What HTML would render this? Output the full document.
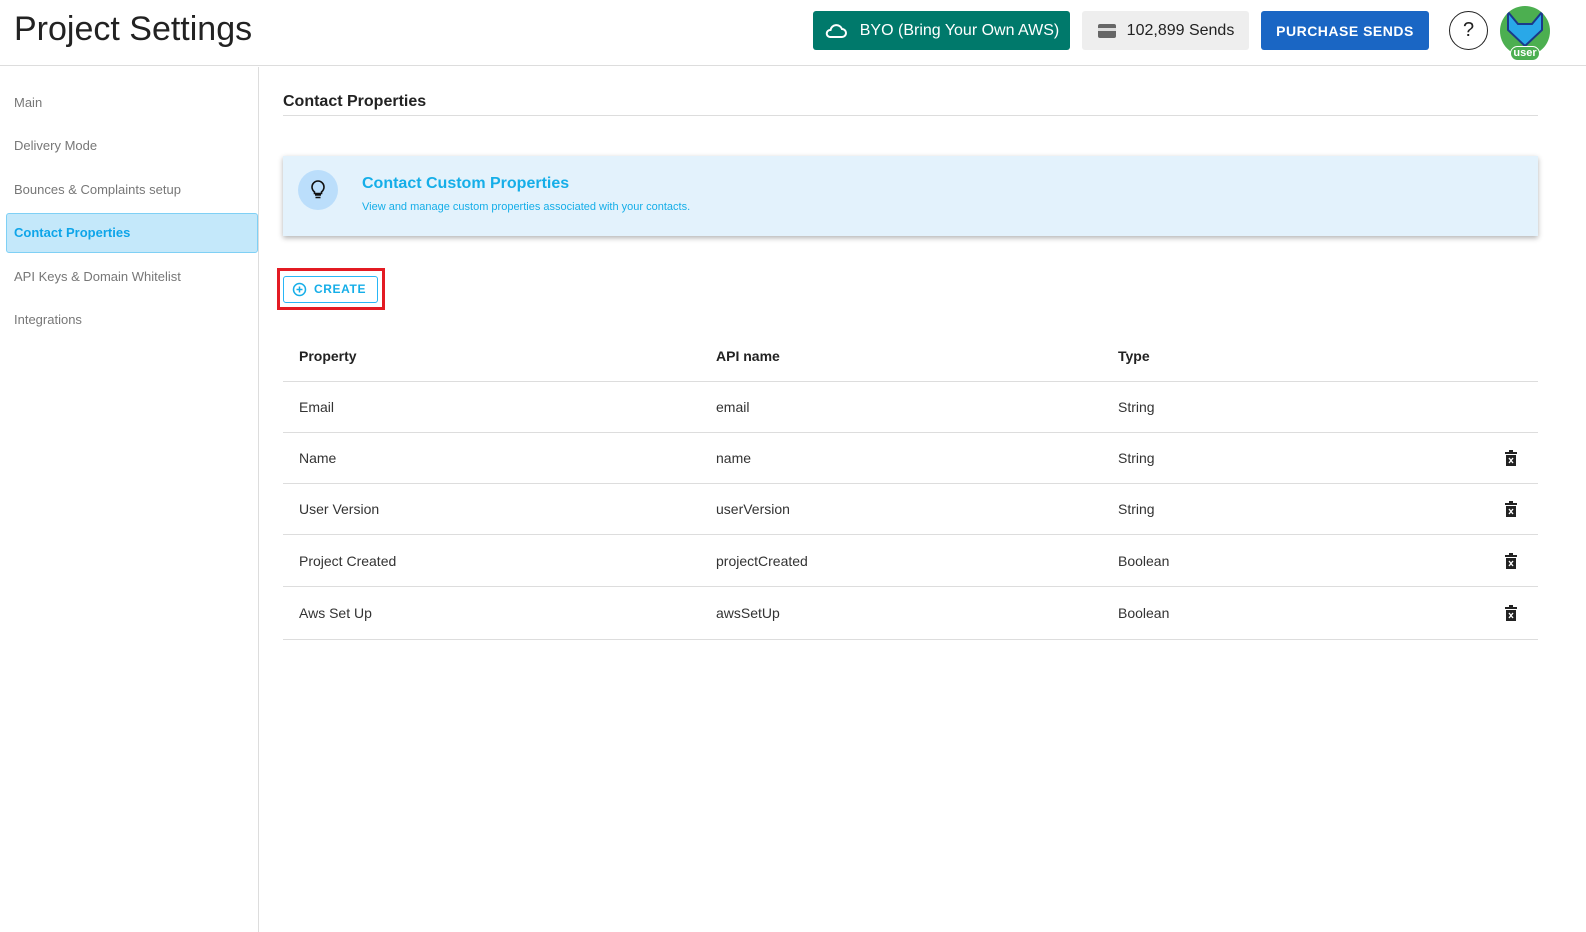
<!DOCTYPE html>
<html><head><meta charset="utf-8"><style>
*{box-sizing:border-box;margin:0;padding:0}
body{width:1586px;height:932px;background:#fff;font-family:"Liberation Sans",sans-serif;position:relative;overflow:hidden;color:#222}
.abs{position:absolute}
.hdr{left:0;top:0;width:1586px;height:66px;border-bottom:1px solid #ddd}
h1{position:absolute;left:14px;top:10px;font-size:34px;font-weight:400;color:#222}
.btn{position:absolute;top:11px;height:39px;border-radius:3px;display:flex;align-items:center;justify-content:center;font-size:16px}
.side{left:0;top:67px;width:259px;height:865px;border-right:1px solid #ddd}
.nav{position:absolute;left:14px;font-size:13px;color:#777}
.row{position:absolute;left:283px;width:1255px;height:51px;border-bottom:1px solid #ddd;font-size:14px;color:#333}
.row span{position:absolute;top:50%;transform:translateY(-50%)}
.c1{left:16px}.c2{left:433px}.c3{left:835px}
.del{position:absolute;left:1222px;top:50%;transform:translateY(-50%)}
</style></head><body>
<div class="abs hdr"></div>
<h1>Project Settings</h1>
<div class="btn" style="left:813px;width:257px;background:#00796b;color:#fff">
<svg width="24" height="20" viewBox="0 0 24 20" style="margin-right:12px"><path d="M6 16h12a4 4 0 0 0 0-8 6 6 0 0 0-11.5 1A3.5 3.5 0 0 0 6 16z" fill="none" stroke="#fff" stroke-width="2"/></svg>BYO (Bring Your Own AWS)</div>
<div class="btn" style="left:1082px;width:167px;background:#eee;color:#222">
<svg width="20" height="16" style="margin-right:10px"><rect x="1" y="1" width="18" height="14" rx="2" fill="#666"/><rect x="1" y="5" width="18" height="3" fill="#ddd"/></svg>102,899 Sends</div>
<div class="btn" style="left:1261px;width:168px;background:#1a66c4;color:#fff;font-weight:700;font-size:14px;letter-spacing:.5px">PURCHASE SENDS</div>
<div class="abs" style="left:1449px;top:11px;width:39px;height:39px;border:1px solid #222;border-radius:50%;text-align:center;line-height:37px;font-size:20px">?</div>
<div class="abs" style="left:1500px;top:6px;width:50px;height:50px;border-radius:50%;background:#4caf50;overflow:hidden">
<svg width="50" height="50"><polygon points="8,6 18,18 32,18 42,6 42,24 25,40 8,24" fill="#29a8e8" stroke="#1a3a8a" stroke-width="2"/></svg></div>
<div class="abs" style="left:1510px;top:46px;width:30px;height:15px;border-radius:8px;background:#4caf50;border:1px solid #fff;color:#fff;font-size:11px;font-weight:700;text-align:center;line-height:13px">user</div>

<div class="abs side"></div>
<div class="nav" style="top:95px">Main</div>
<div class="nav" style="top:138px">Delivery Mode</div>
<div class="nav" style="top:182px">Bounces &amp; Complaints setup</div>
<div class="abs" style="left:6px;top:213px;width:252px;height:40px;background:#c4e8fa;border:1px solid #7fd0f5;border-radius:3px"></div>
<div class="nav" style="top:225px;color:#0ea5e9;font-weight:700">Contact Properties</div>
<div class="nav" style="top:269px">API Keys &amp; Domain Whitelist</div>
<div class="nav" style="top:312px">Integrations</div>

<div class="abs" style="left:283px;top:93px;font-size:16px;font-weight:700;color:#222">Contact Properties</div>
<div class="abs" style="left:283px;top:115px;width:1255px;height:1px;background:#ddd"></div>

<div class="abs" style="left:283px;top:156px;width:1255px;height:80px;background:#e3f2fc;box-shadow:0 2px 5px rgba(0,0,0,.3)"></div>
<div class="abs" style="left:298px;top:170px;width:40px;height:40px;border-radius:50%;background:#bbdefb;text-align:center">
<svg width="40" height="40"><path d="M17 25h6M17.5 27.5h5M16.5 22c-1.5-1.3-2.5-2.8-2.5-5a6 6 0 0 1 12 0c0 2.2-1 3.7-2.5 5v1.5h-7z" fill="none" stroke="#111" stroke-width="1.6"/></svg></div>
<div class="abs" style="left:362px;top:175px;font-size:16px;font-weight:700;color:#15aee8">Contact Custom Properties</div>
<div class="abs" style="left:362px;top:201px;font-size:11px;color:#15aee8">View and manage custom properties associated with your contacts.</div>

<div class="abs" style="left:277px;top:268px;width:108px;height:42px;border:3px solid #e31b23"></div>
<div class="abs" style="left:283px;top:276px;width:95px;height:27px;border:1px solid #29b6f6;border-radius:3px;color:#15aee8;font-size:12px;font-weight:700;letter-spacing:.6px;line-height:25px;padding-left:30px;white-space:nowrap">CREATE</div>
<svg class="abs" style="left:292px;top:282px" width="15" height="15"><circle cx="7.5" cy="7.5" r="6" fill="none" stroke="#15aee8" stroke-width="1.5"/><path d="M7.5 4.5v6M4.5 7.5h6" stroke="#15aee8" stroke-width="1.5"/></svg>

<div class="row" style="top:331px;font-weight:700;color:#222"><span class="c1">Property</span><span class="c2">API name</span><span class="c3">Type</span></div>
<div class="row" style="top:382px"><span class="c1">Email</span><span class="c2">email</span><span class="c3">String</span></div>
<div class="row" style="top:433px"><span class="c1">Name</span><span class="c2">name</span><span class="c3">String</span><svg class="del" width="12" height="16"><path d="M0 2h12v2H0zM4 0h4v2H4zM1 5h10v11H1z" fill="#222"/><path d="M4 8l4 5M8 8l-4 5" stroke="#fff" stroke-width="1.4"/></svg></div>
<div class="row" style="top:484px"><span class="c1">User Version</span><span class="c2">userVersion</span><span class="c3">String</span><svg class="del" width="12" height="16"><path d="M0 2h12v2H0zM4 0h4v2H4zM1 5h10v11H1z" fill="#222"/><path d="M4 8l4 5M8 8l-4 5" stroke="#fff" stroke-width="1.4"/></svg></div>
<div class="row" style="top:536px"><span class="c1">Project Created</span><span class="c2">projectCreated</span><span class="c3">Boolean</span><svg class="del" width="12" height="16"><path d="M0 2h12v2H0zM4 0h4v2H4zM1 5h10v11H1z" fill="#222"/><path d="M4 8l4 5M8 8l-4 5" stroke="#fff" stroke-width="1.4"/></svg></div>
<div class="row" style="top:587px;height:53px"><span class="c1">Aws Set Up</span><span class="c2">awsSetUp</span><span class="c3">Boolean</span><svg class="del" width="12" height="16"><path d="M0 2h12v2H0zM4 0h4v2H4zM1 5h10v11H1z" fill="#222"/><path d="M4 8l4 5M8 8l-4 5" stroke="#fff" stroke-width="1.4"/></svg></div>
</body></html>
